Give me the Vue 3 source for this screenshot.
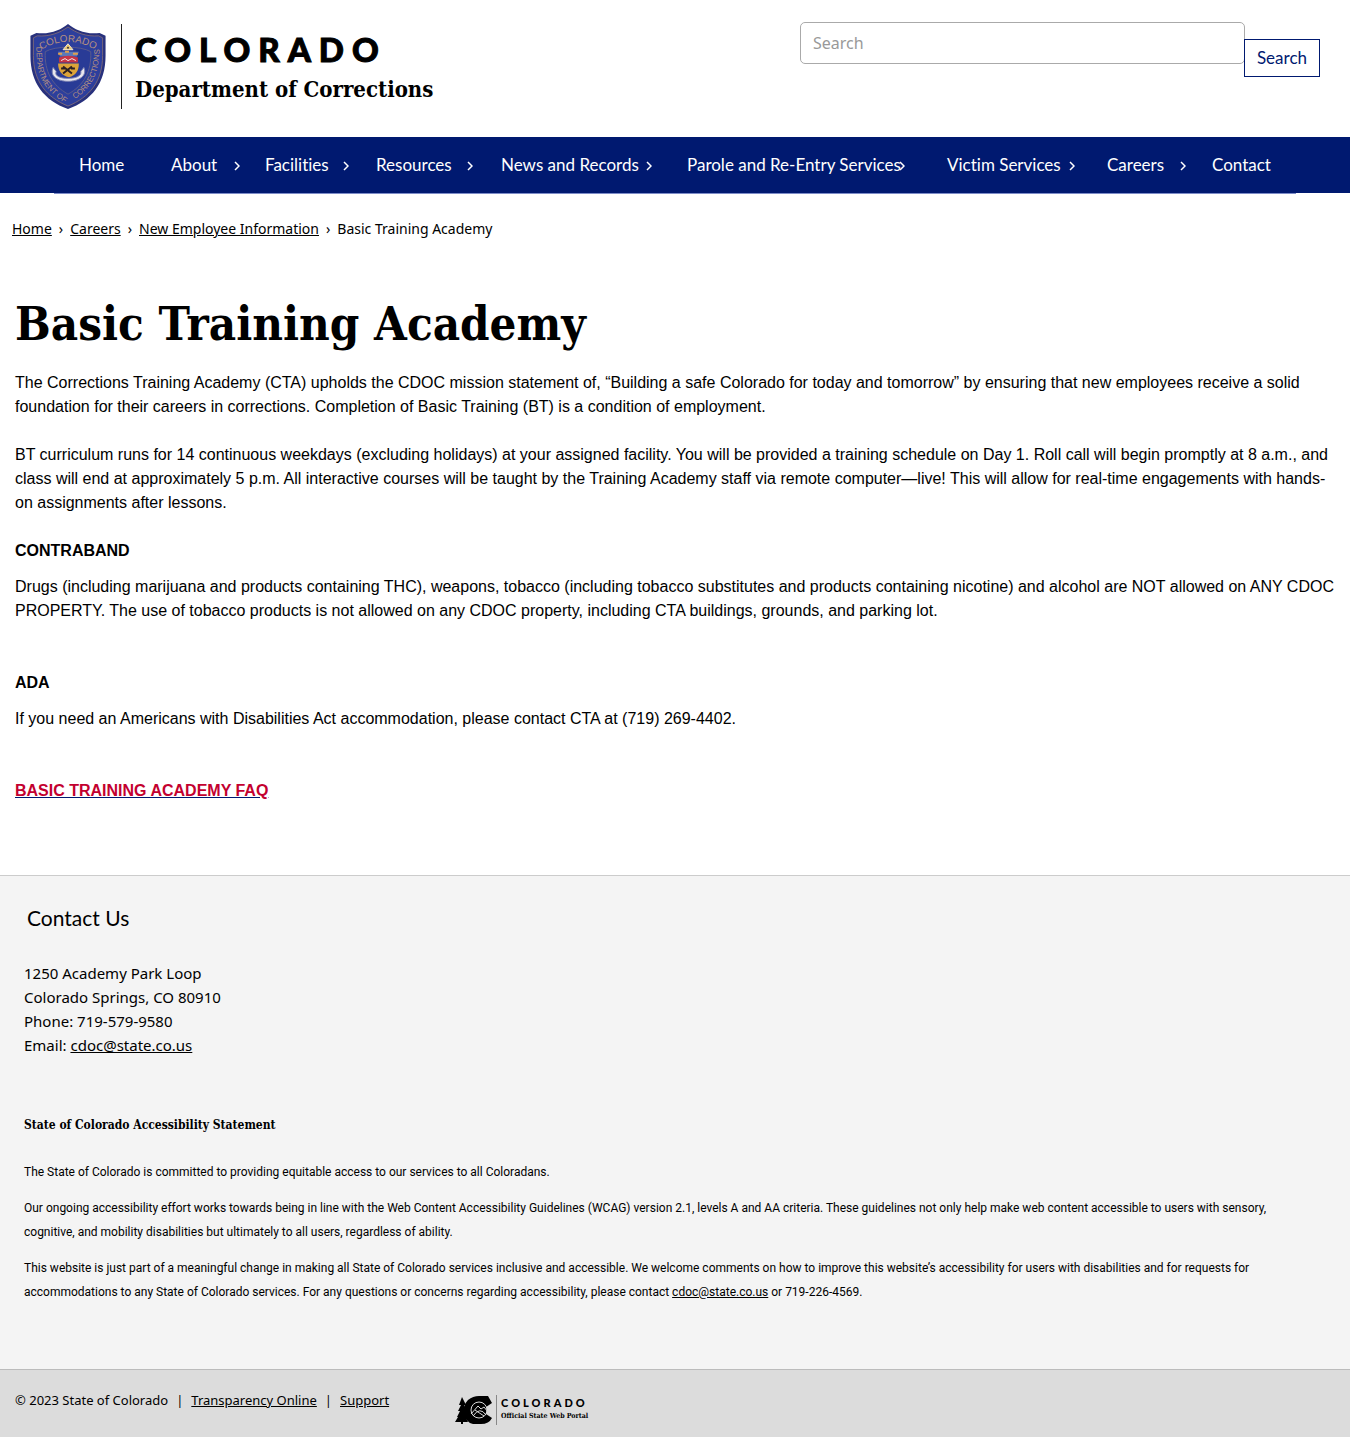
<script setup>
const navItems = [
  { label: 'Home', menu: false },
  { label: 'About', menu: true },
  { label: 'Facilities', menu: true },
  { label: 'Resources', menu: true },
  { label: 'News and Records', menu: true },
  { label: 'Parole and Re-Entry Services', menu: true },
  { label: 'Victim Services', menu: true },
  { label: 'Careers', menu: true },
  { label: 'Contact', menu: false },
]
const crumbs = ['Home', 'Careers', 'New Employee Information']
</script>

<template>
  <div class="page">
    <header class="masthead">
      <a class="brand" href="#">
        <svg class="crest" viewBox="0 0 76 86" role="img" aria-label="Department of Corrections crest">
          <defs>
            <path id="arc-top" d="M11 26Q38 10 65 26" />
            <path id="arc-left" d="M6 25C6 52 12 64 33 79" />
            <path id="arc-right" d="M42 78C63 64 70 50 70 22" />
          </defs>
          <path d="M38 0C31 6 19 11 6 9L0 12V32C0 60 14 77 38 86C62 77 76 60 76 32V12L70 9C57 11 45 6 38 0Z" fill="#28317d" />
          <path d="M38 3C30 9 19 13 7 12L3 14V32C3 58 16 74 38 83C60 74 73 58 73 32V14L69 12C57 13 46 9 38 3Z" fill="#2d3f9c" stroke="#75647a" stroke-width="1" />
          <path d="M15 28C25 22 51 22 61 28C62 48 54 62 38 71C22 62 14 48 15 28Z" fill="#293b96" stroke="#5a5a8c" stroke-width="1" />
          <g class="crest-text">
            <text><textPath href="#arc-top" startOffset="50%" text-anchor="middle" font-size="10">COLORADO</textPath></text>
            <text><textPath href="#arc-left" startOffset="50%" text-anchor="middle" font-size="8">DEPARTMENT OF</textPath></text>
            <text><textPath href="#arc-right" startOffset="50%" text-anchor="middle" font-size="8">CORRECTIONS</textPath></text>
          </g>
          <path d="M38 20L43 26H33Z" fill="#e8c46a" stroke="#f3ead0" />
          <circle cx="38" cy="24" r="1" fill="#334" />
          <path d="M28 28h21l-2 5H30Z" fill="#5b79b8" />
          <path d="M28 30h4m3-2h4m4 2h5" stroke="#e2a04b" stroke-width="2" />
          <path d="M29 34q9-4 19 0v5H29Z" fill="#c63445" />
          <path d="M31 37l4-2 3 2 4-2 4 2" stroke="#f2eef0" fill="none" />
          <path d="M28 40h21c0 7-3 12-10 14-8-2-11-7-11-14Z" fill="#dda439" />
          <path d="M33 43l9 7m0-7l-9 7M31 45h4m6 0h4" stroke="#2c2024" stroke-width="2" />
          <path d="M23 44c-4 9 5 14 15 14s20-5 16-14l-3 4c1 5-6 7-13 7s-14-2-12-7Z" fill="#e9e7ee" stroke="#7c83b2" />
        </svg>
        <span class="brand-text">
          <span class="brand-state">COLORADO</span>
          <span class="brand-dept">Department of Corrections</span>
        </span>
      </a>
      <form class="search" @submit.prevent>
        <input type="text" placeholder="Search" aria-label="Search" />
        <button type="submit">Search</button>
      </form>
    </header>

    <nav class="main-nav" aria-label="Main">
      <ul>
        <li v-for="item in navItems" :key="item.label">
          <a href="#">{{ item.label }}</a>
          <svg v-if="item.menu" class="chevron" viewBox="0 0 6 10" aria-hidden="true">
            <path d="M1 1l4 4-4 4" />
          </svg>
        </li>
      </ul>
    </nav>

    <nav class="breadcrumb" aria-label="Breadcrumb">
      <template v-for="crumb in crumbs" :key="crumb">
        <a href="#">{{ crumb }}</a>
        <span class="sep">›</span>
      </template>
      <span>Basic Training Academy</span>
    </nav>

    <main class="content">
      <h1>Basic Training Academy</h1>
      <p>The Corrections Training Academy (CTA) upholds the CDOC mission statement of, “Building a safe Colorado for today and tomorrow” by ensuring that new employees receive a solid foundation for their careers in corrections. Completion of Basic Training (BT) is a condition of employment.</p>
      <p>BT curriculum runs for 14 continuous weekdays (excluding holidays) at your assigned facility. You will be provided a training schedule on Day 1. Roll call will begin promptly at 8 a.m., and class will end at approximately 5 p.m. All interactive courses will be taught by the Training Academy staff via remote computer—live! This will allow for real-time engagements with hands-on assignments after lessons.</p>
      <h2>CONTRABAND</h2>
      <p class="section-end">Drugs (including marijuana and products containing THC), weapons, tobacco (including tobacco substitutes and products containing nicotine) and alcohol are NOT allowed on ANY CDOC PROPERTY. The use of tobacco products is not allowed on any CDOC property, including CTA buildings, grounds, and parking lot.</p>
      <h2>ADA</h2>
      <p class="section-end">If you need an Americans with Disabilities Act accommodation, please contact CTA at (719) 269-4402.</p>
      <a class="faq" href="#">BASIC TRAINING ACADEMY FAQ</a>
    </main>

    <footer>
      <section class="contact">
        <h2>Contact Us</h2>
        <address>
          1250 Academy Park Loop<br />
          Colorado Springs, CO 80910<br />
          Phone: 719-579-9580<br />
          Email: <a href="#">cdoc@state.co.us</a>
        </address>
        <h3>State of Colorado Accessibility Statement</h3>
        <p>The State of Colorado is committed to providing equitable access to our services to all Coloradans.</p>
        <p>Our ongoing accessibility effort works towards being in line with the Web Content Accessibility Guidelines (WCAG) version 2.1, levels A and AA criteria. These guidelines not only help make web content accessible to users with sensory, cognitive, and mobility disabilities but ultimately to all users, regardless of ability.</p>
        <p>This website is just part of a meaningful change in making all State of Colorado services inclusive and accessible. We welcome comments on how to improve this website’s accessibility for users with disabilities and for requests for accommodations to any State of Colorado services. For any questions or concerns regarding accessibility, please contact <a href="#">cdoc@state.co.us</a> or 719-226-4569.</p>
      </section>
      <div class="legal">
        <div class="legal-links">
          <span>© 2023 State of Colorado</span><span>|</span><a href="#">Transparency Online</a><span>|</span><a href="#">Support</a>
        </div>
        <a class="portal" href="#">
          <svg viewBox="0 0 38 30" aria-hidden="true">
            <path d="M7 2l4 8-2 0 3 6-2 0 3 7-2 0 2 4H8v2H6v-2H0l3-5H2l3-6H3l3-6H4Z" fill="#000" />
            <path d="M13 5Q18 1 24 1H33L37 8L31 12Q25 7 20 11Q16 16 20 20Q25 24 31 19L37 23Q34 29 26 29H18Q10 27 9 18Q8 10 13 5Z" fill="#000" />
            <circle cx="24" cy="15" r="8" fill="#000" stroke="#dcdcdc" />
            <path d="M16 19l7-8 3 3 3-2 4 5M18 21q7-10 13-1M20 15l9 6" stroke="#dcdcdc" fill="none" />
          </svg>
          <span class="portal-text">
            <span class="portal-state">COLORADO</span>
            <span class="portal-name">Official State Web Portal</span>
          </span>
        </a>
      </div>
    </footer>
  </div>
</template>

<style>
body {
  margin: 0;
  background: #fff;
}
</style>

<style scoped>
.page {
  color: #000;
  font-family: "Noto Sans", sans-serif;
}
a {
  color: inherit;
}
h1,
h2,
h3,
p,
ul {
  margin: 0;
  padding: 0;
}
.masthead {
  display: flex;
  justify-content: space-between;
  padding: 22px 30px 28px;
}
.brand {
  display: flex;
  align-items: flex-start;
  padding-top: 2px;
  text-decoration: none;
}
.crest {
  width: 76px;
  height: 85px;
}
.crest-text {
  fill: #b58f80;
  font-family: "Liberation Sans", sans-serif;
}
.brand-text {
  display: flex;
  flex-direction: column;
  height: 85px;
  margin-left: 15px;
  padding-left: 13px;
  border-left: 1px solid #222;
}
.brand-state {
  font: 900 33px/50px Lato, sans-serif;
  letter-spacing: 8px;
  -webkit-text-stroke: 1px #000;
}
.brand-dept {
  font: 700 22px/30px "DejaVu Serif Condensed", "DejaVu Serif", serif;
}
.search {
  display: flex;
  align-items: flex-start;
  width: 520px;
}
.search input {
  box-sizing: border-box;
  flex: 1;
  min-width: 0;
  height: 42px;
  padding: 0 12px;
  border: 1px solid #aaa;
  border-radius: 5px;
  background: #fff;
  font: 16px/24px "Noto Sans", sans-serif;
}
.search input::placeholder {
  color: #999;
  opacity: 1;
}
.search button {
  height: 38px;
  margin: 17px 0 0 -1px;
  padding: 0 12px;
  border: 1px solid #001970;
  background: #fff;
  color: #001970;
  font: 17px/24px Lato, sans-serif;
}
.main-nav {
  height: 56px;
  background: #001970;
}
.main-nav ul {
  display: grid;
  grid-template-columns: 92fr 94fr 111fr 125fr 186fr 260fr 160fr 105fr 84fr;
  margin: 0 4%;
  padding-left: 25px;
  border-bottom: 1px solid #7d8cc8;
  list-style: none;
}
.main-nav li {
  position: relative;
}
.main-nav a {
  display: block;
  color: #fff;
  font: 17px/56px Lato, sans-serif;
  font-variant-ligatures: none;
  text-decoration: none;
  white-space: nowrap;
}
.chevron {
  position: absolute;
  top: 24px;
  right: calc(10% + 16px);
  width: 6px;
  height: 10px;
  fill: none;
  stroke: #fff;
  stroke-width: 1.5;
}
.breadcrumb {
  display: flex;
  gap: 7px;
  padding: 24px 12px 0;
  font-size: 14px;
  line-height: 24px;
}
.content {
  padding: 48px 15px 72px;
  font: 16px/24px "Liberation Sans", sans-serif;
}
.content h1 {
  margin-bottom: 12px;
  font: 700 47px/70px "DejaVu Serif Condensed", "DejaVu Serif", serif;
}
.content p {
  margin-bottom: 24px;
}
.content h2 {
  margin-bottom: 12px;
  font-size: 16px;
  line-height: 24px;
}
.content .section-end {
  margin-bottom: 48px;
}
.faq {
  display: inline-block;
  color: #c3002f;
  font-weight: 700;
  text-decoration-color: #001970;
}
.contact {
  padding: 27px 24px 53px;
  border-top: 1px solid #ccc;
  background: #f4f4f4;
}
.contact h2 {
  margin: 0 3px 28px;
  font: 21px/30px Lato, sans-serif;
}
.contact address {
  margin-bottom: 56px;
  font-size: 15px;
  font-style: normal;
  line-height: 24px;
}
.contact h3 {
  margin-bottom: 23px;
  font: 700 12px/24px "DejaVu Serif Condensed", "DejaVu Serif", serif;
}
.contact p {
  margin: 0 16px 12px 0;
  font: 12px/24px Roboto, sans-serif;
}
.legal {
  display: flex;
  align-items: flex-start;
  gap: 66px;
  padding: 18px 15px 12px;
  border-top: 1px solid #bbb;
  background: #dcdcdc;
}
.legal-links {
  display: flex;
  gap: 8px;
  font-size: 13px;
  line-height: 24px;
}
.portal {
  display: flex;
  margin-top: 7px;
  text-decoration: none;
}
.portal svg {
  width: 38px;
  height: 30px;
}
.portal-text {
  display: flex;
  flex-direction: column;
  margin-left: 3px;
  padding-left: 4px;
  border-left: 1px solid #888;
}
.portal-state {
  font: 900 11px/16px Lato, sans-serif;
  letter-spacing: 3px;
}
.portal-name {
  font: 700 7px/10px "DejaVu Serif Condensed", "DejaVu Serif", serif;
}
</style>
